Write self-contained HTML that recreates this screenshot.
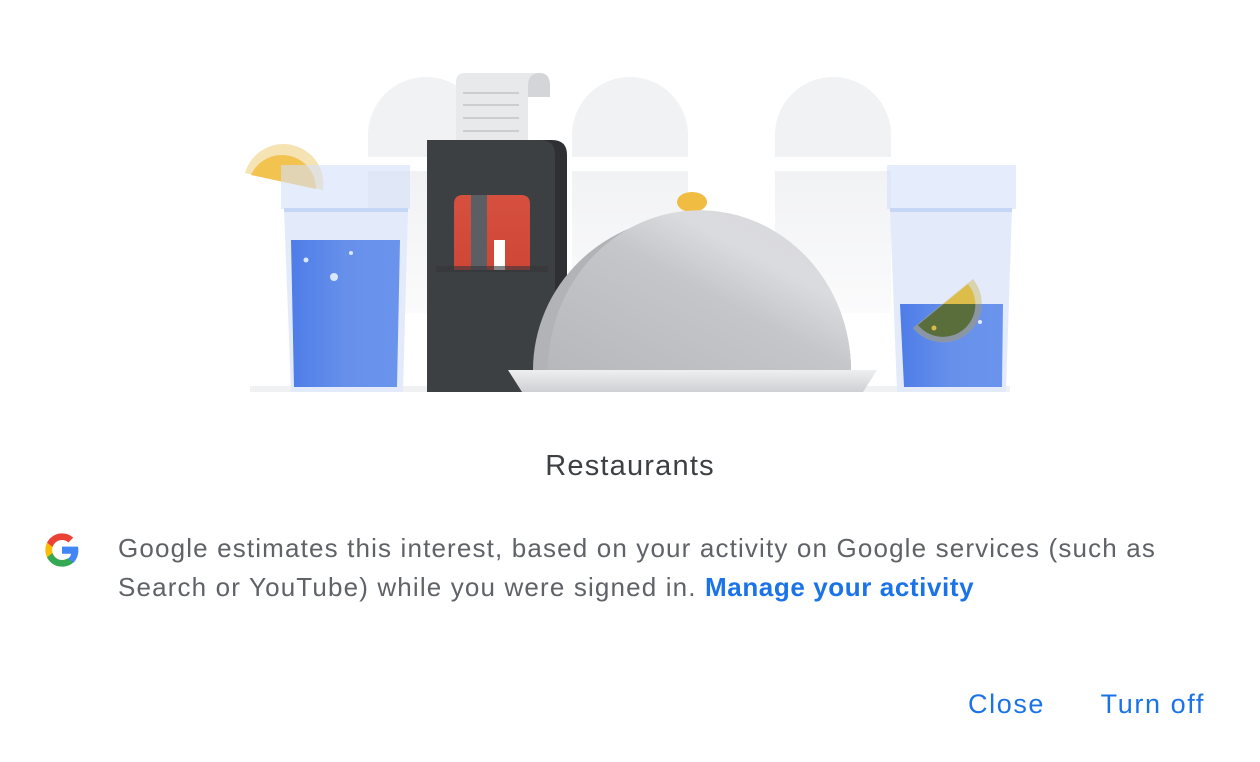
<!DOCTYPE html>
<html><head><meta charset="utf-8"><style>
html,body{margin:0;padding:0;width:1260px;height:762px;background:#fff;overflow:hidden;font-family:"Liberation Sans",Arial,sans-serif}
.t{position:absolute;white-space:nowrap}
</style></head><body>
<svg width="1260" height="400" style="position:absolute;left:0;top:0">
<defs>
<linearGradient id="fade" x1="0" y1="0" x2="0" y2="1"><stop offset="0" stop-color="#f1f2f4"/><stop offset="1" stop-color="#fbfbfc"/></linearGradient>
<linearGradient id="water" x1="0" y1="0" x2="1" y2="0"><stop offset="0" stop-color="#4e7de8"/><stop offset="0.5" stop-color="#6690ea"/><stop offset="1" stop-color="#6a94ec"/></linearGradient>
<linearGradient id="dome" x1="0" y1="1" x2="1" y2="0"><stop offset="0" stop-color="#b6b8bc"/><stop offset="0.5" stop-color="#c4c6ca"/><stop offset="0.7" stop-color="#dadbde"/><stop offset="1" stop-color="#d8d9dc"/></linearGradient>
<linearGradient id="plate" x1="0" y1="0" x2="0" y2="1"><stop offset="0" stop-color="#eeeff0"/><stop offset="1" stop-color="#cfd0d3"/></linearGradient>
<linearGradient id="red" x1="0" y1="0" x2="0" y2="1"><stop offset="0" stop-color="#d6503f"/><stop offset="1" stop-color="#cf4636"/></linearGradient>
<clipPath id="wclip"><path d="M900 304 H1003 L1002 387 H904Z"/></clipPath>
</defs>
<rect x="250" y="386" width="760" height="6" fill="#f0f1f2"/>
<g fill="#f1f2f4">
<path d="M368 157 V135 A58 58 0 0 1 484 135 V157Z"/>
<path d="M572 157 V135 A58 58 0 0 1 688 135 V157Z"/>
<path d="M775 157 V135 A58 58 0 0 1 891 135 V157Z"/>
</g>
<rect x="368" y="171" width="116" height="142" fill="url(#fade)"/>
<rect x="572" y="171" width="116" height="142" fill="url(#fade)"/>
<rect x="775" y="171" width="116" height="142" fill="url(#fade)"/>
<path d="M456 140 V82 Q456 73 465 73 H537 Q550 73 550 86 V97 H528 V140Z" fill="#e8e9eb"/>
<path d="M528 97 V86 Q528 73 540 73 Q550 73 550 86 V97Z" fill="#d3d5d8"/>
<g stroke="#c2c4c7" stroke-width="1.5"><line x1="463" y1="93" x2="519" y2="93"/><line x1="463" y1="105" x2="519" y2="105"/><line x1="463" y1="118" x2="519" y2="118"/><line x1="463" y1="131" x2="519" y2="131"/></g>
<path d="M427 140 H552 Q567 140 567 155 V392 H427Z" fill="#2e3034"/>
<path d="M427 140 H540 Q555 140 555 155 V392 H427Z" fill="#3d4043"/>
<path d="M454 270 V204 Q454 195 463 195 H521 Q530 195 530 204 V270Z" fill="url(#red)"/>
<rect x="471" y="195" width="16" height="75" fill="#5b5e63"/>
<rect x="494" y="240" width="11" height="30" fill="#fff"/>
<rect x="436" y="266" width="112" height="6" fill="#33363a" opacity="0.6"/>
<path d="M284 209 H408 L403 392 H291Z" fill="#e3ebfb"/>
<path d="M291 240 H400 L397 387 H294Z" fill="url(#water)"/>
<circle cx="306" cy="260" r="2.5" fill="#dbe6fb"/><circle cx="351" cy="253" r="2" fill="#dbe6fb"/><circle cx="334" cy="277" r="4" fill="#dbe6fb"/>
<path d="M245 173 A40 40 0 0 1 323 190 Z" fill="#f5e3b3"/>
<path d="M251 175 A34 34 0 0 1 316 189 Z" fill="#f2c34f"/>
<rect x="281" y="165" width="129" height="44" fill="#d4e0f8" opacity="0.6"/>
<rect x="284" y="208" width="124" height="4" fill="#c6d6f6"/>
<rect x="689" y="208" width="6" height="10" fill="#b9bbbf"/>
<ellipse cx="692" cy="202" rx="15" ry="10" fill="#f0bc42"/>
<path d="M533 370 A159 154 0 0 1 851 370Z" fill="#b1b3b7"/>
<path d="M548 370 A146 154 0 0 1 851 370Z" fill="url(#dome)"/>
<path d="M508 370 H877 L863 392 H522Z" fill="url(#plate)"/>
<path d="M890 209 H1012 L1006 392 H897Z" fill="#e3ebfb"/>
<path d="M900 304 H1003 L1002 387 H904Z" fill="url(#water)"/>
<path d="M973 279 A38 38 0 0 1 913 328 Z" fill="#d8d3b0"/>
<path d="M968 284 A32 32 0 0 1 918 325 Z" fill="#ddbd4a"/>
<g clip-path="url(#wclip)"><path d="M973 279 A38 38 0 0 1 913 328 Z" fill="#3d5a9a" opacity="0.5"/><path d="M968 284 A32 32 0 0 1 918 325 Z" fill="#5a6e3c"/></g>
<circle cx="934" cy="328" r="2.5" fill="#d6bc4a"/><circle cx="980" cy="322" r="2" fill="#e3ebfb"/>
<rect x="887" y="165" width="129" height="44" fill="#d4e0f8" opacity="0.6"/>
<rect x="890" y="208" width="122" height="4" fill="#c6d6f6"/>
</svg>
<div class="t" style="left:0;width:1260px;text-align:center;top:450px;font-size:29px;letter-spacing:1.2px;color:#3c4043">Restaurants</div>
<svg width="40" height="40" viewBox="0 0 48 48" style="position:absolute;left:42px;top:530px">
<path fill="#4285f4" d="M43.6 24.5c0-1.6-.1-3.1-.4-4.5H24v8.5h11c-.5 2.5-1.9 4.6-4 6v5h6.5c3.8-3.5 6.1-8.7 6.1-15z"/>
<path fill="#34a853" d="M24 44c5.4 0 10-1.8 13.4-4.9l-6.5-5c-1.8 1.2-4.1 1.9-6.9 1.9-5.3 0-9.7-3.6-11.3-8.4H6v5.2C9.3 39.4 16.1 44 24 44z"/>
<path fill="#fbbc05" d="M12.7 27.6c-.4-1.200-.6-2.500-.6-3.600s.2-2.400.6-3.600v-5.200H6C4.700 17.900 4 20.900 4 24s.7 6.100 2 8.800z"/>
<path fill="#ea4335" d="M24 12c3 0 5.600 1 7.700 3l5.800-5.800C34 6 29.400 4 24 4 16.100 4 9.300 8.600 6 15.200l6.700 5.200C14.300 15.600 18.700 12 24 12z"/>
</svg>
<div class="t" style="left:118px;top:529px;font-size:26px;letter-spacing:1.15px;line-height:39px;color:#5f6368">Google estimates this interest, based on your activity on Google services (such as<br>Search or YouTube) while you were signed in. <span style="color:#1a73e8;font-weight:bold;letter-spacing:0.6px">Manage your activity</span></div>
<div class="t" style="left:968px;top:689px;font-size:27px;letter-spacing:1.6px;color:#1a73e8">Close</div>
<div class="t" style="right:55px;top:689px;font-size:27px;letter-spacing:1.6px;color:#1a73e8">Turn off</div>
</body></html>
